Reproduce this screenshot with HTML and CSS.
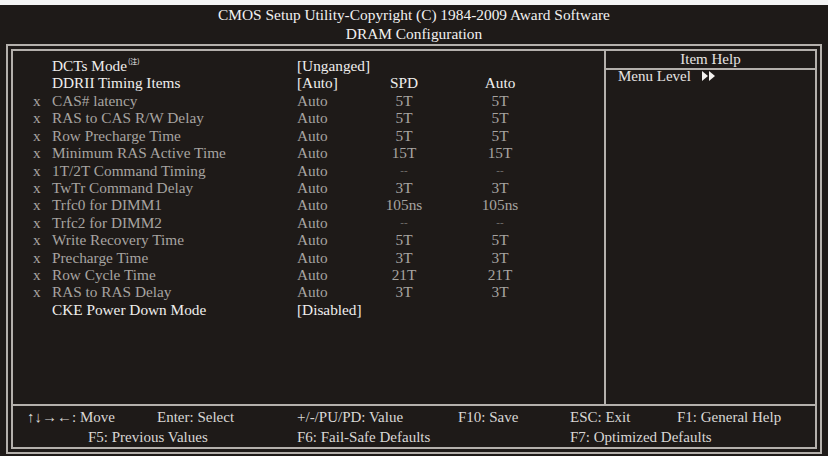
FILE: index.html
```html
<!DOCTYPE html>
<html>
<head>
<meta charset="utf-8">
<link rel="stylesheet" href="styles.css">
</head>
<body>
<div class="strip"></div>
<div class="screen">
  <div class="header">
    <div class="title">CMOS Setup Utility-Copyright (C) 1984-2009 Award Software</div>
    <div class="title">DRAM Configuration</div>
  </div>
  <div class="frame">
    <div class="main">
      <div class="items">
        <div class="row on"><span class="mk"></span><span class="lb">DCTs Mode<sup class="note">(注)</sup></span><span class="vl">[Unganged]</span><span class="c"></span><span class="c"></span></div>
        <div class="row on"><span class="mk"></span><span class="lb">DDRII Timing Items</span><span class="vl">[Auto]</span><span class="c">SPD</span><span class="c">Auto</span></div>
        <div class="row off"><span class="mk">x</span><span class="lb">CAS# latency</span><span class="vl">Auto</span><span class="c">5T</span><span class="c">5T</span></div>
        <div class="row off"><span class="mk">x</span><span class="lb">RAS to CAS R/W Delay</span><span class="vl">Auto</span><span class="c">5T</span><span class="c">5T</span></div>
        <div class="row off"><span class="mk">x</span><span class="lb">Row Precharge Time</span><span class="vl">Auto</span><span class="c">5T</span><span class="c">5T</span></div>
        <div class="row off"><span class="mk">x</span><span class="lb">Minimum RAS Active Time</span><span class="vl">Auto</span><span class="c">15T</span><span class="c">15T</span></div>
        <div class="row off"><span class="mk">x</span><span class="lb">1T/2T Command Timing</span><span class="vl">Auto</span><span class="c dash">--</span><span class="c dash">--</span></div>
        <div class="row off"><span class="mk">x</span><span class="lb">TwTr Command Delay</span><span class="vl">Auto</span><span class="c">3T</span><span class="c">3T</span></div>
        <div class="row off"><span class="mk">x</span><span class="lb">Trfc0 for DIMM1</span><span class="vl">Auto</span><span class="c">105ns</span><span class="c">105ns</span></div>
        <div class="row off"><span class="mk">x</span><span class="lb">Trfc2 for DIMM2</span><span class="vl">Auto</span><span class="c dash">--</span><span class="c dash">--</span></div>
        <div class="row off"><span class="mk">x</span><span class="lb">Write Recovery Time</span><span class="vl">Auto</span><span class="c">5T</span><span class="c">5T</span></div>
        <div class="row off"><span class="mk">x</span><span class="lb">Precharge Time</span><span class="vl">Auto</span><span class="c">3T</span><span class="c">3T</span></div>
        <div class="row off"><span class="mk">x</span><span class="lb">Row Cycle Time</span><span class="vl">Auto</span><span class="c">21T</span><span class="c">21T</span></div>
        <div class="row off"><span class="mk">x</span><span class="lb">RAS to RAS Delay</span><span class="vl">Auto</span><span class="c">3T</span><span class="c">3T</span></div>
        <div class="row on"><span class="mk"></span><span class="lb">CKE Power Down Mode</span><span class="vl">[Disabled]</span><span class="c"></span><span class="c"></span></div>
      </div>
      <div class="help">
        <div class="help-title">Item Help</div>
        <div class="help-body">Menu Level <svg class="arrows" width="16" height="10" viewBox="0 0 16 10"><polygon points="1,0 7,5 1,10" fill="#f2f0ee"/><polygon points="8,0 14,5 8,10" fill="#f2f0ee"/></svg></div>
      </div>
    </div>
    <div class="footer">
      <div class="frow">
        <span>↑↓→←: Move</span><span>Enter: Select</span><span>+/-/PU/PD: Value</span><span>F10: Save</span><span>ESC: Exit</span><span>F1: General Help</span>
      </div>
      <div class="frow">
        <span class="f5">F5: Previous Values</span><span class="f6">F6: Fail-Safe Defaults</span><span class="f7">F7: Optimized Defaults</span>
      </div>
    </div>
  </div>
</div>
</body>
</html>
```
FILE: styles.css
```css
html, body {
  margin: 0;
  padding: 0;
  background: #f4f4f4;
}
body {
  width: 828px;
  height: 456px;
  overflow: hidden;
  font-family: "Liberation Serif", "Times New Roman", serif;
}
.strip {
  height: 5px;
  background: #f4f4f4;
}
.screen {
  height: 451px;
  background: #1e1a18;
  padding: 0 6px 0 6px;
  box-sizing: border-box;
  color: #ecebea;
}
.header {
  height: 39px;
  text-align: center;
}
.title {
  font-size: 15.4px;
  line-height: 19px;
  color: #f2f1f0;
}
.frame {
  height: 410px;
  border: 7px double #b4b0ac;
  box-sizing: border-box;
  display: flex;
  flex-direction: column;
}
.main {
  height: 354px;
  display: flex;
  border-bottom: 2px solid #b4b0ac;
}
.items {
  width: 593px;
  border-right: 2px solid #b4b0ac;
  padding: 6px 0 0 20px;
  box-sizing: border-box;
}
.row {
  display: grid;
  grid-template-columns: 19px 245px 70px 74px 118px;
  font-size: 15.3px;
  line-height: 17.43px;
  height: 17.43px;
  white-space: nowrap;
}
.row.on { color: #efeeed; }
.row.off { color: #a7a4a1; }
.c { text-align: center; }
.dash { color: #777370; font-size: 11px; }
.note {
  font-family: "Noto Sans CJK SC", sans-serif;
  font-size: 7px;
  vertical-align: 7px;
  line-height: 0;
  margin-left: 1px;
}
.help {
  flex: 1;
}
.help-title {
  height: 17px;
  line-height: 17px;
  border-bottom: 2px solid #b4b0ac;
  text-align: center;
  font-size: 15px;
  color: #e6e4e2;
}
.help-body {
  padding-left: 12px;
  font-size: 15px;
  line-height: 12px;
  color: #e6e4e2;
  display: flex;
  align-items: center;
}
.arrows {
  margin-left: 10px;
}
.footer {
  flex: 1;
  padding: 1px 0 0 14px;
  font-size: 15px;
  color: #d9d7d5;
}
.frow {
  display: grid;
  grid-template-columns: 130px 140px 161px 112px 107px 1fr;
  line-height: 20px;
  white-space: nowrap;
}
.f5 { grid-column: 1 / 3; padding-left: 61px; }
.f6 { grid-column: 3 / 5; }
.f7 { grid-column: 5 / 7; }
```
